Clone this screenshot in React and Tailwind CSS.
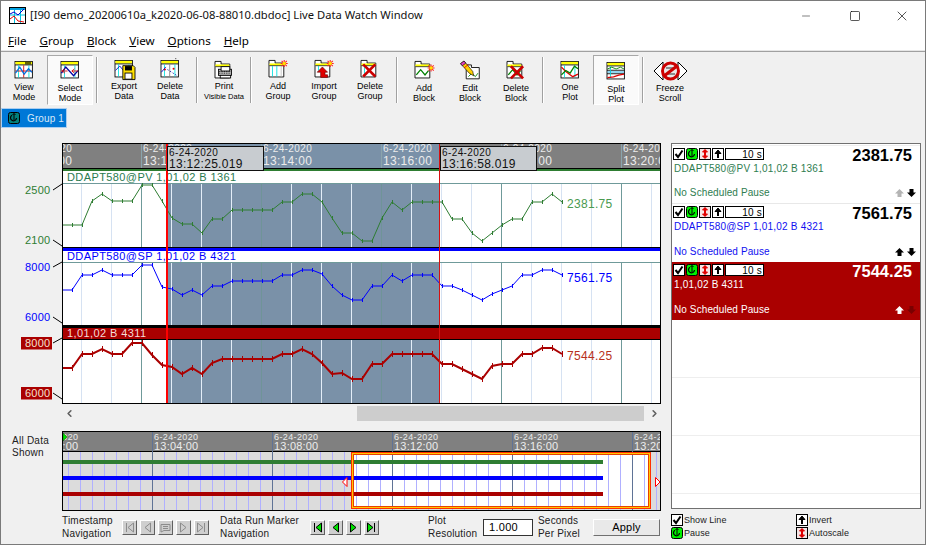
import { ChevronLeft, ChevronRight, Minus, Square, X } from 'lucide-react';

const uiFont = "font-['Liberation_Sans',Arial,sans-serif]";

const xs = Array.from({ length: 51 }, (_, i) => 62 + i * 10);
const greenY = [225,225,225,201,194,201,201,201,185,185,201,218,224,224,233,219,219,210,210,210,210,210,202,202,194,194,202,218,233,233,241,241,218,202,210,202,202,202,202,219,219,233,241,233,225,219,219,202,202,194,202];
const blueY = [290,290,275,275,270,275,275,275,265,265,287,289,295,290,295,286,286,281,281,281,281,281,275,275,270,270,274,286,295,300,300,286,286,275,281,275,275,275,286,286,290,295,300,294,290,286,275,275,270,270,275];
const redY = [368,368,354,354,349,354,354,343,343,355,365,367,374,368,374,363,359,359,359,359,359,359,354,354,349,354,363,374,373,379,379,364,364,354,354,354,354,354,364,364,369,374,379,366,364,364,354,354,348,348,354];

const GREEN = '#2e7d32';
const BLUE = '#0000ff';
const RED = '#aa0000';

const majorX = [141, 261, 381, 501, 621];
const minorX = [81, 111, 171, 201, 231, 291, 321, 351, 411, 441, 471, 531, 561, 591, 651];

function Series({ ys, color, width, tick }) {
  return (
    <g stroke={color} fill="none" strokeWidth={width}>
      <polyline points={xs.map((x, i) => `${x},${ys[i]}`).join(' ')} />
      {xs.map((x, i) => (
        <line key={x} x1={x} x2={x} y1={ys[i] - tick} y2={ys[i] + tick} strokeWidth={1} shapeRendering="crispEdges" />
      ))}
    </g>
  );
}

function PlotGrid({ top, bottom }) {
  return (
    <g shapeRendering="crispEdges">
      <rect x="166" y={top} width="273" height={bottom - top} fill="#7a91a8" />
      {minorX.map((x) => (
        <line key={x} x1={x + 0.5} x2={x + 0.5} y1={top} y2={bottom} stroke={x > 166 && x < 439 ? '#e4eef8' : '#d6e2f2'} />
      ))}
      {majorX.map((x) => (
        <line key={x} x1={x + 0.5} x2={x + 0.5} y1={top} y2={bottom} stroke={x > 166 && x < 439 ? '#6f9498' : '#6f9a9a'} />
      ))}
    </g>
  );
}

function AxisLabel({ y, tickTo, text, color, boxed }) {
  return (
    <g>
      <line x1="53" y1={y} x2="62" y2={tickTo} stroke="#000" strokeWidth="1" />
      {boxed && <rect x="21" y={y - 6} width="31" height="12.5" fill={RED} />}
      <text x="25" y={y + 4} fontSize="11" letterSpacing="0.2" fill={boxed ? '#f4e0d0' : color}>{text}</text>
    </g>
  );
}

function TimeStamp({ x, time }) {
  return (
    <g fill="#ececec">
      <line x1={x + 0.5} x2={x + 0.5} y1="144" y2="168" stroke="#8aa4ac" shapeRendering="crispEdges" />
      <text x={x + 2} y="152" fontSize="10" letterSpacing="0.4">6-24-2020</text>
      <text x={x + 2} y="165" fontSize="12" letterSpacing="0.3">{time}</text>
    </g>
  );
}

function SelectBox({ x, time }) {
  return (
    <g>
      <rect x={x + 0.5} y="146.5" width="96" height="24" fill="#c8ccd0" stroke="#111" />
      <text x={x + 2} y="156" fontSize="10" letterSpacing="0.4" fill="#111">6-24-2020</text>
      <text x={x + 2} y="168" fontSize="12" letterSpacing="0.3" fill="#111">{time}</text>
    </g>
  );
}

function MainChart() {
  return (
    <svg width="661" height="262" viewBox="1 143 661 262" className={`block ${uiFont}`}>
      <defs>
        <clipPath id="plotClip"><rect x="62" y="143" width="599" height="261" /></clipPath>
      </defs>
      <g clipPath="url(#plotClip)">
        <rect x="62" y="143" width="599" height="261" fill="#fff" />
        <rect x="62" y="143" width="599" height="25" fill="#808080" />
        <rect x="166" y="143" width="273" height="25" fill="#7a91a8" />
        <TimeStamp x={21} time="13:10:00" />
        <TimeStamp x={141} time="13:12:00" />
        <TimeStamp x={261} time="13:14:00" />
        <TimeStamp x={381} time="13:16:00" />
        <TimeStamp x={501} time="13:18:00" />
        <TimeStamp x={621} time="13:20:00" />
        <g shapeRendering="crispEdges">
          <rect x="62" y="168" width="599" height="1" fill="#000" />
          <rect x="62" y="169" width="599" height="2" fill={GREEN} />
          <rect x="62" y="183" width="599" height="1" fill="#6f9a9a" />
          <rect x="62" y="262" width="599" height="1" fill="#6f9a9a" />
        </g>
        <PlotGrid top={184} bottom={247} />
        <PlotGrid top={263} bottom={325} />
        <PlotGrid top={339} bottom={403} />
        <g shapeRendering="crispEdges">
          <rect x="62" y="247" width="599" height="1" fill="#000" />
          <rect x="62" y="248" width="599" height="2.5" fill={BLUE} />
          <rect x="62" y="325" width="599" height="3" fill="#000" />
          <rect x="62" y="328" width="599" height="11" fill={RED} />
          <rect x="62" y="339" width="599" height="1" fill="#000" />
        </g>
        <text x="67" y="181" fontSize="11" letterSpacing="0.4" fill="#2a7a50">DDAPT580@PV 1,01,02 B 1361</text>
        <text x="67" y="260" fontSize="11" letterSpacing="0.4" fill={BLUE}>DDAPT580@SP 1,01,02 B 4321</text>
        <text x="67" y="337" fontSize="11" letterSpacing="0.4" fill="#f6dcd8">1,01,02 B 4311</text>
        <Series ys={greenY} color={GREEN} width={1} tick={2} />
        <Series ys={blueY} color={BLUE} width={1} tick={2} />
        <Series ys={redY} color={RED} width={2} tick={3} />
        <text x="567" y="208" fontSize="12" letterSpacing="0.3" fill="#4a9a50">2381.75</text>
        <text x="567" y="282" fontSize="12" letterSpacing="0.3" fill={BLUE}>7561.75</text>
        <text x="567" y="360" fontSize="12" letterSpacing="0.3" fill="#b83020">7544.25</text>
        <g shapeRendering="crispEdges">
          <rect x="165.5" y="143" width="2" height="261" fill="#ff0000" />
          <rect x="439" y="143" width="1" height="261" fill="#d81010" />
        </g>
        <SelectBox x={167} time="13:12:25.019" />
        <SelectBox x={440} time="13:16:58.019" />
      </g>
      <rect x="62" y="143.5" width="598.5" height="260" fill="none" stroke="#000" shapeRendering="crispEdges" />
      <AxisLabel y={190} tickTo={184} text="2500" color={GREEN} />
      <AxisLabel y={240} tickTo={246} text="2100" color={GREEN} />
      <AxisLabel y={267} tickTo={262} text="8000" color={BLUE} />
      <AxisLabel y={317} tickTo={323} text="6000" color={BLUE} />
      <AxisLabel y={343} tickTo={338} text="8000" boxed />
      <AxisLabel y={393} tickTo={399} text="6000" boxed />
    </svg>
  );
}

const miniMinor = Array.from({ length: 50 }, (_, i) => 68 + i * 12);
const miniMajor = [152, 272, 392, 512, 632];

function MiniChart() {
  const stamps = [
    [32, '13:00:00'], [152, '13:04:00'], [272, '13:08:00'], [392, '13:12:00'], [512, '13:16:00'], [632, '13:20:00'],
  ];
  return (
    <svg width="600" height="80" viewBox="62 431 600 80" className={`block ${uiFont}`}>
      <defs>
        <clipPath id="miniClip"><rect x="62" y="431" width="599" height="80" /></clipPath>
      </defs>
      <g clipPath="url(#miniClip)">
        <rect x="62" y="431" width="599" height="20" fill="#808080" />
        <rect x="62" y="452" width="599" height="59" fill="#dcdcdc" />
        <rect x="351" y="452" width="299" height="57" fill="#fff" />
        <g shapeRendering="crispEdges">
          <rect x="62" y="451" width="599" height="1" fill="#000" />
          {miniMinor.map((x) => (
            <line key={x} x1={x + 0.5} x2={x + 0.5} y1="452" y2="511" stroke="#b0b0ff" />
          ))}
          {miniMajor.map((x) => (
            <line key={x} x1={x + 0.5} x2={x + 0.5} y1="432" y2="511" stroke="#5f7396" />
          ))}
          <rect x="62" y="460" width="541" height="4" fill={GREEN} />
          <rect x="62" y="476" width="541" height="4" fill={BLUE} />
          <rect x="62" y="492" width="541" height="4" fill={RED} />
        </g>
        {stamps.map(([x, t]) => (
          <g key={x} fill="#ececec">
            <text x={x + 2} y="440" fontSize="9" letterSpacing="0.38">6-24-2020</text>
            <text x={x + 2} y="449.5" fontSize="11" letterSpacing="0.2">{t}</text>
          </g>
        ))}
        <polygon points="63,433 67,437 63,441" fill="#00e000" stroke="#006000" strokeWidth="0.5" />
        <rect x="351.5" y="452.5" width="299" height="56" fill="none" stroke="#ff3000" shapeRendering="crispEdges" />
        <rect x="352.5" y="453.5" width="297" height="54" fill="none" stroke="#ffc800" shapeRendering="crispEdges" />
        <rect x="353.5" y="454.5" width="295" height="52" fill="none" stroke="#e84000" shapeRendering="crispEdges" />
        <polygon points="342.5,482 347,477.5 347,486.5" fill="#fff" stroke="#ff0000" />
        <polygon points="660,482 655.5,477.5 655.5,486.5" fill="#fff" stroke="#ff0000" />
      </g>
      <rect x="62.5" y="431.5" width="598" height="79" fill="none" stroke="#000" shapeRendering="crispEdges" />
    </svg>
  );
}

function ChartFrame({ children, stripe = '#ffff00' }) {
  return (
    <>
      <rect x="0.5" y="0.5" width="20" height="19" fill="#fff" stroke="#000" />
      <rect x="1" y="1" width="19" height="3" fill={stripe} />
      <line x1="0.5" x2="20.5" y1="4.5" y2="4.5" stroke="#000" />
      <line x1="4.5" x2="4.5" y1="5" y2="19" stroke="#00e0e0" />
      <line x1="16.5" x2="16.5" y1="5" y2="19" stroke="#00e0e0" />
      {children}
    </>
  );
}

function Folder({ children }) {
  return (
    <>
      <path d="M0.5 19.5V0.5H7.5V3.5H17.5V19.5Z" fill="#fff" stroke="#000" />
      <line x1="1" x2="17" y1="6.5" y2="6.5" stroke="#000" />
      <rect x="1" y="4" width="16" height="2" fill="#ffff00" />
      {children}
    </>
  );
}

const Star = ({ x = 18, y = 3 }) => (
  <g transform={`translate(${x} ${y})`}>
    <path d="M-4 0H4M0 -4V4M-3 -3L3 3M-3 3L3 -3" stroke="#ff2020" strokeWidth="1.2" />
    <circle r="2" fill="#ffe000" />
  </g>
);

const RedX = ({ x = 9, y = 11 }) => (
  <path
    transform={`translate(${x} ${y})`}
    d="M-7 -7L7 7M7 -7L-7 7"
    stroke="#cc0000"
    strokeWidth="3"
  />
);

const icons = {
  view: (
    <ChartFrame>
      <rect x="12" y="1" width="7" height="3" fill="#000" opacity="0.6" />
      <line x1="1" x2="20" y1="11.5" y2="11.5" stroke="#e00000" />
      <line x1="10.5" x2="10.5" y1="5" y2="19" stroke="#e00000" />
      <polyline points="1,14 6,7 11,15 16,9 20,13" fill="none" stroke="#0070e0" strokeWidth="1.5" />
    </ChartFrame>
  ),
  select: (
    <ChartFrame>
      <polyline points="1,14 6,7 15,17 20,11" fill="none" stroke="#0000a0" strokeWidth="1.5" />
      <path d="M1 11.5H8M5 9L2 11.5L5 14M13 11.5H20M16 9L13 11.5L16 14" fill="none" stroke="#e00000" />
    </ChartFrame>
  ),
  export: (
    <>
      <ChartFrame>
        <polyline points="1,12 6,7 11,13" fill="none" stroke="#0000c0" />
      </ChartFrame>
      <path d="M9.5 6.5H21.5L23.5 8.5V22.5H9.5Z" fill="#ffe000" stroke="#000" />
      <rect x="12" y="7" width="8" height="5" fill="#000" />
      <rect x="12" y="15" width="8" height="7" fill="#fff" stroke="#000" />
    </>
  ),
  deleteData: (
    <ChartFrame>
      <line x1="10.5" x2="10.5" y1="5" y2="19" stroke="#808080" />
      <polyline points="1,14 6,8" fill="none" stroke="#0000d0" />
      <path d="M8 11L19 18" stroke="#0000a0" strokeDasharray="1.5 2" />
      <circle cx="5" cy="11" r="1.2" fill="#e00000" />
      <circle cx="15" cy="10" r="1.2" fill="#e00000" />
      <rect x="17" y="-2" width="1" height="1" fill="#000" />
    </ChartFrame>
  ),
  print: (
    <Folder>
      <rect x="4.5" y="9.5" width="15" height="7" fill="#c0c0c0" stroke="#000" />
      <rect x="7.5" y="6.5" width="10" height="5" fill="#fff" stroke="#000" />
      <path d="M5 12H19M5 14H19" stroke="#000" strokeDasharray="1 1" />
      <rect x="6.5" y="16.5" width="12" height="3" fill="#fff" stroke="#000" />
    </Folder>
  ),
  addGroup: (
    <Folder>
      <line x1="4.5" x2="4.5" y1="7" y2="19" stroke="#00e0e0" />
      <line x1="9.5" x2="9.5" y1="7" y2="19" stroke="#00e0e0" />
      <line x1="14.5" x2="14.5" y1="7" y2="19" stroke="#c0c0c0" />
      <Star x={18} y={4} />
    </Folder>
  ),
  importGroup: (
    <Folder>
      <line x1="4.5" x2="4.5" y1="7" y2="12" stroke="#00e0e0" />
      <path d="M9 8L15 14H12V17H15V20H7V14H3Z" fill="#e00000" stroke="#600000" strokeWidth="0.7" />
      <Star x={18} y={4} />
    </Folder>
  ),
  deleteGroup: (
    <Folder>
      <line x1="4.5" x2="4.5" y1="7" y2="19" stroke="#00e0e0" />
      <RedX x={10} y={12} />
    </Folder>
  ),
  addBlock: (
    <Folder>
      <polyline points="2,16 7,10 12,16 16,11" fill="none" stroke="#008000" strokeWidth="1.5" />
      <Star x={19} y={8} />
    </Folder>
  ),
  editBlock: (
    <>
      <path d="M6.5 20.5V4.5H12.5V7.5H21.5V20.5Z" fill="#fff" stroke="#000" />
      <polyline points="9,18 13,14 17,18 20,14" fill="none" stroke="#008000" />
      <path d="M0 3L4 0L14 12L15 17L10 14Z" fill="#ffd000" stroke="#000" strokeWidth="0.7" />
      <path d="M0 3L4 0L6 2.5L2 5.5Z" fill="#e040c0" stroke="#000" strokeWidth="0.7" />
      <path d="M4 8L9 4" stroke="#e00000" />
    </>
  ),
  deleteBlock: (
    <Folder>
      <polyline points="2,16 7,10 12,16 16,11" fill="none" stroke="#008000" strokeWidth="1.5" />
      <RedX x={12} y={13} />
    </Folder>
  ),
  onePlot: (
    <ChartFrame>
      <polyline points="1,7 6,12 14,18 20,15" fill="none" stroke="#e00000" strokeWidth="1.5" />
      <polyline points="1,16 6,11 11,14 16,6 20,9" fill="none" stroke="#008000" strokeWidth="1.5" />
    </ChartFrame>
  ),
  splitPlot: (
    <>
      <rect x="0.5" y="0.5" width="20" height="19" fill="#fff" stroke="#000" />
      <rect x="1" y="1" width="19" height="3" fill="#ffff00" />
      <line x1="0.5" x2="20.5" y1="4.5" y2="4.5" stroke="#000" />
      <line x1="0.5" x2="20.5" y1="9.5" y2="9.5" stroke="#000" />
      <line x1="0.5" x2="20.5" y1="13.5" y2="13.5" stroke="#000" />
      <line x1="4.5" x2="4.5" y1="5" y2="19" stroke="#00e0e0" />
      <polyline points="1,8 6,6 11,8 16,6 20,8" fill="none" stroke="#008000" />
      <line x1="1" x2="20" y1="11.5" y2="11.5" stroke="#00a0e0" />
      <polyline points="1,18 8,17 14,15 20,14" fill="none" stroke="#e00000" strokeWidth="1.5" />
    </>
  ),
};

function Freeze() {
  return (
    <svg width="35" height="20" viewBox="0 0 35 20" className="block">
      <path d="M10 1L1 10L10 19V1ZM25 1L34 10L25 19V1Z" fill="#fff" stroke="#000" />
      <rect x="10" y="7" width="15" height="6" fill="#b0b0b0" />
      <circle cx="17.5" cy="10" r="8" fill="#e8e8e8" stroke="#cc0000" strokeWidth="3" />
      <path d="M13 7H20L14 13H22" fill="none" stroke="#333" strokeWidth="1" />
      <line x1="11" y1="15" x2="24" y2="5" stroke="#cc0000" strokeWidth="3" />
    </svg>
  );
}

const tools = [
  { id: 'view', lines: ['View', 'Mode'], top: 6, gap: 2 },
  { id: 'select', lines: ['Select', 'Mode'], active: true, top: 6, gap: 3 },
  'sep',
  { id: 'export', lines: ['Export', 'Data'], top: 5, gap: 2 },
  { id: 'deleteData', lines: ['Delete', 'Data'], top: 5, gap: 2 },
  'sep',
  { id: 'print', lines: ['Print'], sub: 'Visible Data', top: 6, gap: 1 },
  'sep',
  { id: 'addGroup', lines: ['Add', 'Group'], top: 5, gap: 2 },
  { id: 'importGroup', lines: ['Import', 'Group'], top: 5, gap: 2 },
  { id: 'deleteGroup', lines: ['Delete', 'Group'], top: 5, gap: 2 },
  'sep',
  { id: 'addBlock', lines: ['Add', 'Block'], top: 6, gap: 3 },
  { id: 'editBlock', lines: ['Edit', 'Block'], top: 6, gap: 3 },
  { id: 'deleteBlock', lines: ['Delete', 'Block'], top: 6, gap: 3 },
  'sep',
  { id: 'onePlot', lines: ['One', 'Plot'], top: 6, gap: 2 },
  { id: 'splitPlot', lines: ['Split', 'Plot'], active: true, top: 7, gap: 3 },
  'sep',
  { id: 'freeze', lines: ['Freeze', 'Scroll'], top: 6, gap: 3 },
];

function ToolButton({ tool }) {
  const base = 'flex h-[50px] w-[46px] flex-col items-center text-[9px] leading-[9.5px] text-black';
  const look = tool.active ? 'border border-t-[#a8a8a8] border-l-[#a8a8a8] border-b-white border-r-white bg-[#fafafa]' : '';
  return (
    <button className={`${base} ${look}`} style={{ paddingTop: tool.active ? tool.top - 1 : tool.top }}>
      {tool.id === 'freeze' ? (
        <Freeze />
      ) : (
        <svg width="24" height="23" viewBox="0 0 24 23" className="block h-[20px] overflow-visible" style={{ marginLeft: 2 }}>
          {icons[tool.id]}
        </svg>
      )}
      <span className="block" style={{ marginTop: tool.gap }}>
        {tool.lines.map((l) => (
          <span key={l} className="block">{l}</span>
        ))}
        {tool.sub && <span className="block whitespace-nowrap text-[7.5px]">{tool.sub}</span>}
      </span>
    </button>
  );
}

function Toolbar() {
  return (
    <div className="flex h-[56px] items-start pt-[3px]">
      {tools.map((t, i) =>
        t === 'sep' ? (
          <div key={i} className="mx-[3px] mt-[2px] h-[46px] w-[2px] border-l border-r border-l-[#a0a0a0] border-r-white" />
        ) : (
          <ToolButton key={t.id} tool={t} />
        ),
      )}
    </div>
  );
}

function PauseGlyph({ bg = '#00f000' }) {
  return (
    <svg width="12" height="12" viewBox="0 0 12 12" className="block">
      <rect x="0.5" y="0.5" width="11" height="11" rx="2" fill={bg} stroke="#000" />
      <path d="M8.5 6A3 3 0 1 1 4 3.2" fill="none" stroke="#000" strokeWidth="1.2" />
      <path d="M6 1.5V8M4.5 3L6 1.5L7.5 3" fill="none" stroke="#000" />
    </svg>
  );
}

const CheckGlyph = () => (
  <svg width="12" height="12" viewBox="0 0 12 12" className="block">
    <rect x="0.5" y="0.5" width="11" height="11" fill="#fff" stroke="#000" />
    <path d="M2.5 6L5 9L9.5 2.5" fill="none" stroke="#000" strokeWidth="2" />
  </svg>
);

const ScaleGlyph = () => (
  <svg width="12" height="12" viewBox="0 0 12 12" className="block">
    <rect x="0.5" y="0.5" width="11" height="11" fill="#f4e4e4" stroke="#000" />
    <path d="M6 2V10" stroke="#e00000" strokeWidth="2" />
    <path d="M3.5 4L6 1.5L8.5 4ZM3.5 8L6 10.5L8.5 8Z" fill="#e00000" stroke="#e00000" />
  </svg>
);

const InvertGlyph = () => (
  <svg width="12" height="12" viewBox="0 0 12 12" className="block">
    <rect x="0.5" y="0.5" width="11" height="11" fill="#fff" stroke="#000" />
    <path d="M6 3V10" stroke="#000" strokeWidth="2" />
    <path d="M3 5.5L6 2L9 5.5Z" fill="#000" stroke="#000" />
  </svg>
);

const UpArrow = ({ color }) => (
  <svg width="9" height="8" viewBox="0 0 9 8" className="block">
    <path d="M4.5 0L9 4.5H6.5V8H2.5V4.5H0Z" fill={color} />
  </svg>
);

const DownArrow = ({ color }) => (
  <svg width="9" height="8" viewBox="0 0 9 8" className="block">
    <path d="M4.5 8L9 3.5H6.5V0H2.5V3.5H0Z" fill={color} />
  </svg>
);

const channels = [
  { name: 'DDAPT580@PV 1,01,02 B 1361', value: '2381.75', text: 'text-[#2e7d50]', up: '#b4b4b4', down: '#000', row: 'bg-white border-b border-[#e8e8e8]', big: 'text-black' },
  { name: 'DDAPT580@SP 1,01,02 B 4321', value: '7561.75', text: 'text-[#1010f0]', up: '#000', down: '#000', row: 'bg-white', big: 'text-black' },
  { name: '1,01,02 B 4311', value: '7544.25', text: 'text-white', up: '#fff', down: '#7a0000', row: 'bg-[#aa0000]', big: 'text-white' },
];

function ChannelRow({ ch }) {
  return (
    <div className={`flex h-[58px] flex-col pl-[1px] pr-[8px] pt-[2px] ${ch.row}`}>
      <div className="flex items-start justify-between">
        <div>
          <div className="flex items-center gap-[1px]">
            <CheckGlyph />
            <PauseGlyph />
            <ScaleGlyph />
            <InvertGlyph />
            <div className="h-[12px] w-[39px] border border-black bg-white pr-[1px] text-right text-[10px] leading-[11px] tracking-[0.2px] text-black">10 s</div>
          </div>
          <div className={`whitespace-nowrap pl-[1px] pt-[1px] text-[10px] leading-[15px] tracking-[0.2px] ${ch.text}`}>{ch.name}</div>
        </div>
        <div className={`-mt-[2px] text-[16.5px] font-bold leading-[18px] ${ch.big}`}>{ch.value}</div>
      </div>
      <div className="mt-auto flex items-center justify-between pb-[4px]">
        <span className={`pl-[1px] text-[10px] leading-[12px] tracking-[0.1px] ${ch.text}`}>No Scheduled Pause</span>
        <span className="-mr-[4px] flex gap-[3px]">
          <UpArrow color={ch.up} />
          <DownArrow color={ch.down} />
        </span>
      </div>
    </div>
  );
}

function NavButton({ children }) {
  return (
    <button className="flex h-[15px] w-[15px] items-center justify-center border border-t-white border-l-white border-b-[#606060] border-r-[#606060] bg-[#cfcfcf] p-0">
      <svg width="11" height="11" viewBox="0 0 11 11" className="block">{children}</svg>
    </button>
  );
}

const grayLine = { fill: 'none', stroke: '#8c8c8c' };
const greenFill = { fill: '#00e000', stroke: '#000' };

function TwoLine({ first, second, className = '' }) {
  return (
    <div className={`text-[10px] leading-[13px] tracking-[0.2px] text-[#202020] ${className}`}>
      <div className="whitespace-nowrap">{first}</div>
      <div className="whitespace-nowrap">{second}</div>
    </div>
  );
}

function NavRow() {
  return (
    <div className="mt-[3px] flex items-center pl-[61px]">
      <TwoLine first="Timestamp" second="Navigation" className="w-[60px]" />
      <div className="flex gap-[3px]">
        <NavButton><path d="M2.5 1V10M9.5 1L4 5.5L9.5 10Z" {...grayLine} /></NavButton>
        <NavButton><path d="M8.5 1L3 5.5L8.5 10Z" {...grayLine} /></NavButton>
        <NavButton><path d="M1 2.5H10V8.5H4L1 10ZM3 4.5H8M3 6.5H8" {...grayLine} /></NavButton>
        <NavButton><path d="M2.5 1L8 5.5L2.5 10Z" {...grayLine} /></NavButton>
        <NavButton><path d="M8.5 1V10M1.5 1L7 5.5L1.5 10Z" {...grayLine} /></NavButton>
      </div>
      <TwoLine first="Data Run Marker" second="Navigation" className="ml-[11px] w-[90px]" />
      <div className="flex gap-[3px]">
        <NavButton><path d="M2.5 1V10" stroke="#000" /><path d="M9.5 1L4 5.5L9.5 10Z" {...greenFill} /></NavButton>
        <NavButton><path d="M8.5 1L3 5.5L8.5 10Z" {...greenFill} /></NavButton>
        <NavButton><path d="M2.5 1L8 5.5L2.5 10Z" {...greenFill} /></NavButton>
        <NavButton><path d="M8.5 1V10" stroke="#000" /><path d="M1.5 1L7 5.5L1.5 10Z" {...greenFill} /></NavButton>
      </div>
      <TwoLine first="Plot" second="Resolution" className="ml-[49px] w-[55px]" />
      <div className="flex h-[17px] w-[50px] items-center border border-[#333] bg-white pl-[5px] text-[11px] tracking-[0.3px] text-black">1.000</div>
      <TwoLine first="Seconds" second="Per Pixel" className="ml-[5px] w-[55px]" />
      <button className="h-[17px] w-[67px] border border-t-white border-l-white border-b-[#707070] border-r-[#707070] bg-[#e9e9e9] text-[11px] leading-[14px] tracking-[0.2px] text-black">Apply</button>
    </div>
  );
}

function Legend() {
  const item = 'flex items-center gap-[1px] text-[9px] leading-[12px] tracking-[0.05px] text-[#222]';
  return (
    <div className="mt-[5px] grid w-[250px] grid-cols-[125px_125px] gap-y-[1px]">
      <div className={item}><CheckGlyph />Show Line</div>
      <div className={item}><InvertGlyph />Invert</div>
      <div className={item}><PauseGlyph />Pause</div>
      <div className={item}><ScaleGlyph />Autoscale</div>
    </div>
  );
}

export default function App() {
  const menus = ['File', 'Group', 'Block', 'View', 'Options', 'Help'];
  return (
    <div className={`flex h-[545px] w-[926px] flex-col overflow-hidden border border-[#7a7a7a] bg-[#f0f0f0] ${uiFont}`}>
      <div className="flex h-[29px] items-center bg-white">
        <svg width="17" height="17" viewBox="0 0 17 17" className="ml-[8px] block">
          <rect x="0.5" y="0.5" width="16" height="16" fill="#fff" stroke="#000" />
          <rect x="1" y="1" width="15" height="2" fill="#00a0e0" />
          <path d="M1 8H16M5.5 3V16M11.5 3V16" stroke="#00c0e0" />
          <polyline points="1,7 5,5 9,8 15,2" fill="none" stroke="#0000d0" />
          <polyline points="1,12 5,9 9,14 15,15" fill="none" stroke="#e00000" />
        </svg>
        <span className="ml-[4px] whitespace-nowrap font-['Noto_Sans',sans-serif] text-[11.2px] text-[#111]">[I90 demo_20200610a_k2020-06-08-88010.dbdoc] Live Data Watch Window</span>
        <div className="ml-auto flex items-center text-black">
          <Minus size={12} strokeWidth={1} className="mr-[37px]" />
          <Square size={12} strokeWidth={1.3} className="mr-[33px]" />
          <X size={16} strokeWidth={1} className="mr-[15px]" />
        </div>
      </div>
      <div className="flex h-[21px] items-center gap-[13px] border-b border-[#e6e6e6] bg-white pl-[7px] pt-[1px] font-['Noto_Sans',sans-serif] text-[11.6px] text-black">
        {menus.map((m) => (
          <span key={m}><span className="underline">{m[0]}</span>{m.slice(1)}</span>
        ))}
      </div>
      <div className="h-[1px] bg-[#a0a0a0]" />
      <Toolbar />
      <div className="flex h-[20px]">
        <div className="flex h-[20px] w-[66px] items-center gap-[7px] whitespace-nowrap border border-[#aacdf0] bg-[#0078d7] pl-[6px] text-[10px] tracking-[0.1px] text-[#d8e8f8]">
          <PauseGlyph bg="#00807a" />
          Group 1
        </div>
      </div>
      <div className="mt-[15px] flex">
        <div className="w-[670px]">
          <MainChart />
          <div className="ml-[61px] mt-[1px] flex h-[15px] w-[600px] items-center">
            <div className="flex w-[15px] justify-center"><ChevronLeft size={11} strokeWidth={3.5} color="#606060" /></div>
            <div className="h-[15px] w-[570px]"><div className="ml-[280px] h-[15px] w-[287px] bg-[#cdcdcd]" /></div>
            <div className="flex w-[15px] justify-center"><ChevronRight size={11} strokeWidth={3.5} color="#606060" /></div>
          </div>
          <div className="mt-[10px] flex">
            <div className="w-[61px] pl-[11px] pt-[4px] text-[10px] leading-[12px] tracking-[0.25px] text-[#202020]">
              <div>All Data</div>
              <div>Shown</div>
            </div>
            <MiniChart />
          </div>
          <NavRow />
        </div>
        <div className="w-[250px]">
          <div className="h-[366px] border border-[#707070] bg-white pt-[1px]">
            <div className="h-[1px] bg-[#eeeeee]" />
            {channels.map((ch) => (
              <ChannelRow key={ch.value} ch={ch} />
            ))}
            <div className="h-[58px] border-b border-[#eeeeee]" />
            <div className="h-[58px] border-b border-[#eeeeee]" />
            <div className="h-[58px] border-b border-[#eeeeee]" />
          </div>
          <Legend />
        </div>
      </div>
    </div>
  );
}
